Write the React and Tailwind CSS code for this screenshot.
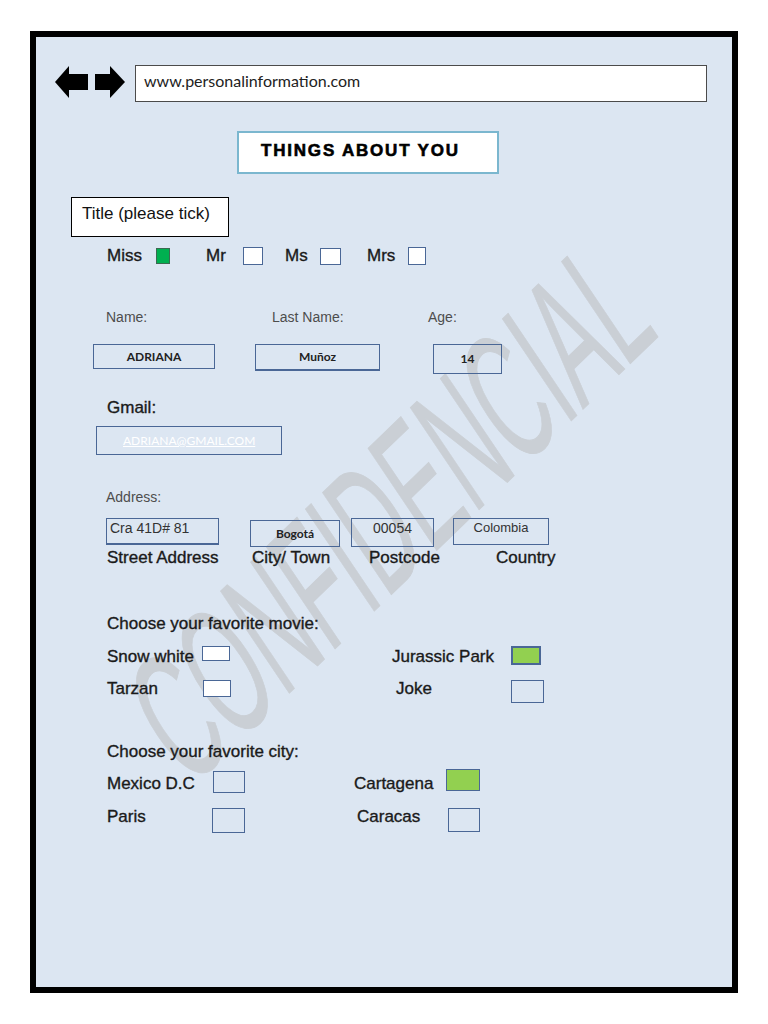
const boxLine = 'border-[1.5px] border-[#4a6796]';
const label = 'text-[17px] leading-[20px] text-[#1a1a1a] [-webkit-text-stroke:0.35px_#1a1a1a]';
const fieldText = "font-['Lato','Open_Sans',sans-serif] font-bold text-[12px] text-[#222]";

const Arrows = () => (
  <svg width="72" height="34" viewBox="0 0 72 34" className="shrink-0">
    <polygon points="1,17 15,1 15,9 34,9 34,25 15,25 15,33" fill="#000" />
    <polygon points="41,9 56,9 56,1 71,17 56,33 56,25 41,25" fill="#000" />
  </svg>
);

export default function App() {
  return (
    <div className="w-[768px] h-[1024px] bg-white pt-[31px] pl-[30px] font-['Liberation_Sans',Arial,sans-serif]">
      <div className="relative w-[708px] h-[962px] border-[6px] border-black bg-[#dce6f2] overflow-hidden">
        {/* watermark */}
        <div className="absolute left-[354px] top-[474px] z-0 pointer-events-none select-none">
          <div className="whitespace-nowrap text-[176px] leading-none text-[#cacfd5] [-webkit-text-stroke:1px_#cacfd5] [transform:translate(-50%,-50%)_rotate(-44deg)_skewX(-10deg)_scaleX(0.5)]">
            CONFIDENCIAL
          </div>
        </div>

        <div className="relative z-10 flex flex-col">
          {/* browser bar */}
          <div className="mt-[28px] ml-[18px] flex items-start">
            <Arrows />
            <div className="ml-[9px] w-[572px] h-[37px] bg-white border-[1.5px] border-[#4b4b4b] flex items-center pl-[8px] pb-[5px]">
              <span className="font-['Lato',sans-serif] text-[16px] text-[#222]">www.personalinformation.com</span>
            </div>
          </div>

          {/* heading */}
          <div className="mt-[29px] ml-[201px] w-[262px] h-[43px] bg-white border-2 border-[#7bb7cf] flex items-center pl-[22px] pb-[3px]">
            <span className="text-[17px] font-bold tracking-[1.8px] text-black [-webkit-text-stroke:0.6px_#000]">THINGS ABOUT YOU</span>
          </div>

          {/* title tick */}
          <div className="mt-[23px] ml-[35px] w-[158px] h-[40px] bg-white border border-black pl-[10px] pt-[4px]">
            <span className="text-[17px] leading-[22px] text-[#111]">Title (please tick)</span>
          </div>

          <div className={`mt-[10px] h-[18px] flex items-center pl-[71px] ${label}`}>
            <span className="w-[49px]">Miss</span>
            <div className="w-[14px] h-[16px] bg-[#00b050] border border-[#3b6a50]" />
            <span className="ml-[36px] w-[37px]">Mr</span>
            <div className={`w-[20px] h-[18px] bg-white ${boxLine}`} />
            <span className="ml-[22px] w-[35px]">Ms</span>
            <div className={`w-[21px] h-[17px] bg-white ${boxLine}`} />
            <span className="ml-[26px] w-[41px]">Mrs</span>
            <div className={`w-[18px] h-[18px] bg-white ${boxLine}`} />
          </div>

          {/* name row */}
          <div className="mt-[43px] h-[18px] flex items-center pl-[70px] text-[14px] text-[#4d4d4d]">
            <span className="w-[166px]">Name:</span>
            <span className="w-[156px]">Last Name:</span>
            <span>Age:</span>
          </div>
          <div className="mt-[18px] h-[30px] flex items-start pl-[57px]">
            <div className={`w-[122px] h-[25px] flex items-center justify-center ${boxLine} ${fieldText}`}>ADRIANA</div>
            <div className={`ml-[40px] w-[125px] h-[27px] flex items-center justify-center ${boxLine} border-b-[2.5px] ${fieldText}`}>Muñoz</div>
            <div className={`ml-[53px] w-[69px] h-[30px] flex items-center justify-center ${boxLine} ${fieldText}`}>14</div>
          </div>

          {/* gmail */}
          <div className={`mt-[24px] pl-[71px] ${label}`}>Gmail:</div>
          <div className={`mt-[8px] ml-[60px] w-[186px] h-[29px] flex items-center pl-[26px] ${boxLine}`}>
            <span className="font-['Lato',sans-serif] text-[12px] text-white underline">ADRIANA@GMAIL.COM</span>
          </div>

          {/* address */}
          <div className="mt-[33px] pl-[70px] text-[14px] leading-[18px] text-[#4d4d4d]">Address:</div>
          <div className="mt-[12px] h-[29px] flex items-start pl-[70px]">
            <div className={`w-[113px] h-[27px] pl-[3px] pt-[1px] text-[14px] leading-[16px] text-[#333] ${boxLine} border-b-[2.5px]`}>Cra 41D# 81</div>
            <div className={`ml-[31px] mt-[2px] w-[90px] h-[27px] flex items-end justify-center pb-[3px] ${boxLine} ${fieldText}`}>Bogotá</div>
            <div className={`ml-[11px] w-[83px] h-[29px] text-center pt-[1px] text-[14px] leading-[16px] text-[#333] ${boxLine}`}>00054</div>
            <div className={`ml-[19px] w-[96px] h-[27px] text-center pt-[1px] text-[13px] leading-[16px] text-[#333] ${boxLine}`}>Colombia</div>
          </div>
          <div className={`mt-[1px] h-[20px] flex items-center pl-[71px] ${label}`}>
            <span className="w-[145px]">Street Address</span>
            <span className="w-[117px]">City/ Town</span>
            <span className="w-[127px]">Postcode</span>
            <span>Country</span>
          </div>

          {/* movies */}
          <div className={`mt-[46px] pl-[71px] ${label}`}>Choose your favorite movie:</div>
          <div className={`mt-[12px] flex items-start pl-[71px] ${label}`}>
            <span className="mt-[1px] w-[95px]">Snow white</span>
            <div className={`w-[28px] h-[15px] bg-white ${boxLine}`} />
            <span className="ml-[162px] mt-[1px] w-[119px]">Jurassic Park</span>
            <div className="w-[30px] h-[19px] bg-[#92d050] border-2 border-[#4a6796]" />
          </div>
          <div className={`mt-[12px] flex items-start pl-[71px] ${label}`}>
            <span className="w-[96px]">Tarzan</span>
            <div className={`mt-[1px] w-[28px] h-[17px] bg-white ${boxLine}`} />
            <span className="ml-[165px] w-[115px]">Joke</span>
            <div className={`mt-[1px] w-[33px] h-[23px] ${boxLine}`} />
          </div>

          {/* cities */}
          <div className={`mt-[39px] pl-[71px] ${label}`}>Choose your favorite city:</div>
          <div className={`mt-[7px] flex items-start pl-[71px] ${label}`}>
            <span className="mt-[5px] w-[106px]">Mexico D.C</span>
            <div className={`mt-[2px] w-[32px] h-[22px] ${boxLine}`} />
            <span className="ml-[109px] mt-[5px] w-[92px]">Cartagena</span>
            <div className="w-[34px] h-[22px] bg-[#92d050] border-[1.5px] border-[#4a6796]" />
          </div>
          <div className={`mt-[13px] flex items-start pl-[71px] ${label}`}>
            <span className="w-[105px]">Paris</span>
            <div className={`mt-[1px] w-[33px] h-[25px] ${boxLine}`} />
            <span className="ml-[112px] w-[91px]">Caracas</span>
            <div className={`mt-[1px] w-[32px] h-[24px] ${boxLine}`} />
          </div>
        </div>
      </div>
    </div>
  );
}
